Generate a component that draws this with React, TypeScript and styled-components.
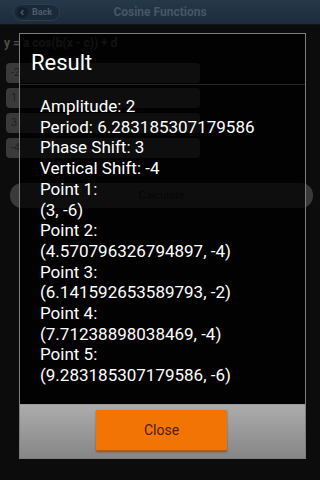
import React from "react";
import styled, { createGlobalStyle } from "styled-components";

const GlobalStyle = createGlobalStyle`
  html, body {
    margin: 0;
    padding: 0;
    background: #000;
    font-family: Roboto, "Liberation Sans", sans-serif;
  }
`;

const Screen = styled.div`
  position: relative;
  width: 320px;
  height: 480px;
  overflow: hidden;
  background: #0c0c0c;
`;

const Header = styled.div`
  height: 25px;
  display: flex;
  align-items: center;
  position: relative;
  background: linear-gradient(#25394b, #1c2c3b);
  border-bottom: 1px solid #0d141b;
  padding-left: 13px;
  box-sizing: border-box;
`;

const BackBtn = styled.div`
  display: flex;
  align-items: center;
  gap: 4px;
  height: 17px;
  padding: 0 7px 0 3px;
  border-radius: 9px;
  background: #1a2a38;
  border: 1px solid #2c3f50;
  color: #4d5d6b;
  font-size: 9px;
  font-weight: 700;
  box-sizing: border-box;
`;

const BackDot = styled.span`
  width: 11px;
  height: 11px;
  border-radius: 50%;
  background: #13202b;
  display: flex;
  align-items: center;
  justify-content: center;
`;

const Title = styled.div`
  position: absolute;
  left: 0;
  right: 0;
  top: 0;
  line-height: 24px;
  text-align: center;
  color: #465766;
  font-size: 12px;
  font-weight: 700;
  pointer-events: none;
`;

const Body = styled.div`
  padding: 11px 2px 0 6px;
  display: flex;
  flex-direction: column;
`;

const Formula = styled.div`
  color: #4c4c4c;
  font-size: 12px;
  font-weight: 700;
  line-height: 14px;
  margin: 0 0 13px -2px;
`;

const Field = styled.div`
  width: 194px;
  height: 20px;
  border-radius: 4px;
  background: #3a3a3a;
  color: #1f1f1f;
  font-size: 11px;
  line-height: 20px;
  padding-left: 5px;
  box-sizing: border-box;
  margin-bottom: 5px;
`;

const CalcBtn = styled.div`
  margin: 20px 5px 0 4px;
  height: 25px;
  border-radius: 12px;
  background: #3a3a3a;
  color: #1c1c1c;
  font-size: 11px;
  line-height: 25px;
  text-align: center;
`;

const Overlay = styled.div`
  position: absolute;
  inset: 0;
  display: flex;
  justify-content: flex-start;
  padding: 33px 0 0 19px;
  box-sizing: border-box;
`;

const Dialog = styled.div`
  width: 287px;
  height: 426px;
  border: 1px solid #7d7d7d;
  background: rgba(0, 0, 0, 0.76);
  display: flex;
  flex-direction: column;
  box-sizing: border-box;
`;

const DialogTitle = styled.div`
  height: 51px;
  padding-left: 11px;
  display: flex;
  align-items: center;
  color: #fff;
  font-size: 22px;
  border-bottom: 1px solid #262626;
  box-sizing: border-box;
  padding-top: 6px;
`;

const Content = styled.div`
  flex: 1;
  padding: 11px 0 0 20px;
  color: #fff;
  font-size: 17px;
  line-height: 20.7px;
`;

const Footer = styled.div`
  height: 54px;
  background: linear-gradient(#acacac, #868686);
  border-top: 1px solid #9a9a9a;
  display: flex;
  justify-content: center;
  align-items: flex-start;
  padding-top: 5px;
  box-sizing: border-box;
`;

const CloseBtn = styled.div`
  width: 131px;
  height: 40px;
  background: #f27405;
  border-bottom: 1px solid #b85a08;
  box-shadow: 0 1px 2px rgba(0, 0, 0, 0.35);
  color: #4a2100;
  font-size: 14px;
  line-height: 40px;
  text-align: center;
  margin-left: -2px;
`;

const lines = [
  "Amplitude: 2",
  "Period: 6.283185307179586",
  "Phase Shift: 3",
  "Vertical Shift: -4",
  "Point 1:",
  "(3, -6)",
  "Point 2:",
  "(4.570796326794897, -4)",
  "Point 3:",
  "(6.141592653589793, -2)",
  "Point 4:",
  "(7.71238898038469, -4)",
  "Point 5:",
  "(9.283185307179586, -6)",
];

const App = () => {
  return (
    <Screen>
      <GlobalStyle />
      <Header>
        <BackBtn>
          <BackDot>
            <svg width="7" height="7" viewBox="0 0 8 8">
              <path d="M5 1.5 L2.5 4 L5 6.5" stroke="#4d5d6b" strokeWidth="1.6" fill="none" />
            </svg>
          </BackDot>
          Back
        </BackBtn>
        <Title>Cosine Functions</Title>
      </Header>
      <Body>
        <Formula>y = a cos(b(x - c)) + d</Formula>
        <Field>-2</Field>
        <Field>1</Field>
        <Field>3</Field>
        <Field>-4</Field>
        <CalcBtn>Calculate</CalcBtn>
      </Body>
      <Overlay>
        <Dialog>
          <DialogTitle>Result</DialogTitle>
          <Content>
            {lines.map((l, i) => (
              <div key={i}>{l}</div>
            ))}
          </Content>
          <Footer>
            <CloseBtn>Close</CloseBtn>
          </Footer>
        </Dialog>
      </Overlay>
    </Screen>
  );
};

export default App;
